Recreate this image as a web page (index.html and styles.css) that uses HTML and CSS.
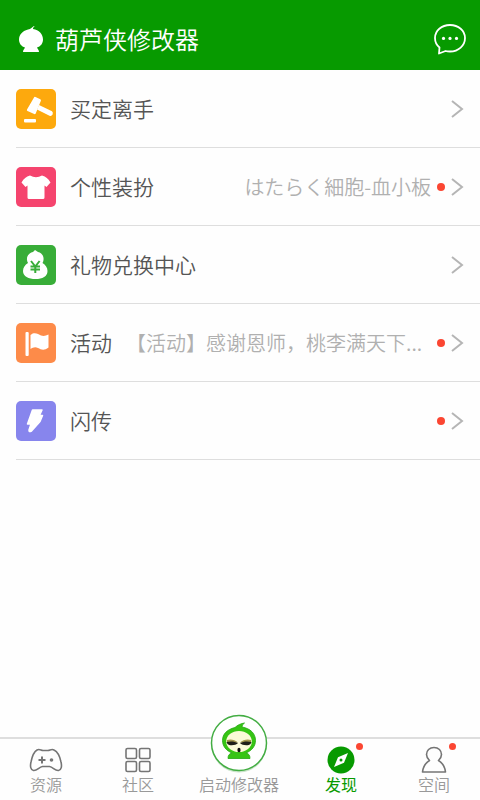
FILE: index.html
```html
<!DOCTYPE html>
<html lang="zh-CN">
<head>
<meta charset="utf-8">
<meta name="viewport" content="width=device-width, initial-scale=1">
<title>葫芦侠修改器</title>
<link rel="stylesheet" href="styles.css">
</head>
<body>
<header class="topbar">
  <svg class="logo" viewBox="0 0 26 28" aria-hidden="true"><path fill="#fff" d="M16 1C14 2 13 4 10 4.500C4 6 1 10 1 14.500C1 18.500 3.500 21.500 7 22.500C6.500 24 5 24.500 5 27H21C21 24.500 19.500 24 19 22.500C22.500 21.500 25 18.500 25 14.500C25 9 21 5 15 4Q14.500 2.500 16.500 1.500Z"/></svg>
  <h1 class="title">葫芦侠修改器</h1>
  <button class="chat" type="button" aria-label="消息">
    <svg viewBox="0 0 34 34" aria-hidden="true"><path fill="none" stroke="#fff" stroke-width="1.800" stroke-linejoin="round" d="M17 3C8.500 3 2 8.600 2 16C2 20 3.500 23 6.500 25.500L6 31.500L12.500 29C14 29.400 15.500 29.500 17 29.500C25.500 29.500 32 23.500 32 16C32 8.600 25.500 3 17 3Z"/><g fill="#fff"><circle cx="10.500" cy="16.400" r="1.600"/><circle cx="17" cy="16.400" r="1.600"/><circle cx="23.500" cy="16.400" r="1.600"/></g></svg>
  </button>
</header>
<main class="list">
  <a class="row" href="#auction">
    <svg class="tile orange" viewBox="0 0 40 40" aria-hidden="true"><g fill="#fff"><rect x="8" y="30" width="12" height="3.600" rx="1"/><path d="M18 8.500Q18.500 7.500 19.500 8L24.300 10.200Q25.300 10.700 24.900 11.700L19.700 24.500Q19.200 25.500 18.200 25L11.500 22Q10.500 21.500 11 20.500Z"/><path d="M23 16L36 22.300Q37.500 23.500 36.500 25.500Q35.500 27.500 33.500 26.700L21 20.500Z"/></g></svg>
    <span class="name">买定离手</span><span class="note"></span>
    <svg class="arrow" viewBox="0 0 14 22" aria-hidden="true"><path d="M2 3L12 11L2 19"/></svg>
  </a>
  <a class="row" href="#dress">
    <svg class="tile pink" viewBox="0 0 40 40" aria-hidden="true"><path fill="#fff" d="M14 8.500Q20 12 26 8.500C30 9.500 32 11.500 34.500 15.500L30.500 20L28.500 18.500V30.500Q28.500 32 27 32H13Q11.500 32 11.500 30.500V18.500L9.500 20L5.500 15.500C8 11.500 10 9.500 14 8.500Z"/></svg>
    <span class="name">个性装扮</span><span class="note end" lang="ja">はたらく細胞-血小板</span><i class="dot"></i>
    <svg class="arrow" viewBox="0 0 14 22" aria-hidden="true"><path d="M2 3L12 11L2 19"/></svg>
  </a>
  <a class="row" href="#gifts">
    <svg class="tile green" viewBox="0 0 40 40" aria-hidden="true"><path fill="#fff" d="M17 7L19 5L22 7C26 8 28 11 27.500 15C27.500 16 27 17 26.500 18C29.500 20 31.500 22.500 31.500 26C31.500 31.500 26.500 34 19.500 34S7 31.500 7 26C7 22.500 9 20 12 18C11.500 17 11 16 11 15C10.500 11 13 8 17 7Z"/><path fill="none" stroke="#38ad38" stroke-width="2" d="M15 16L19.300 21.500L23.600 16M14.500 21.500H24M14.500 24.500H24M19.300 21V28"/></svg>
    <span class="name">礼物兑换中心</span><span class="note"></span>
    <svg class="arrow" viewBox="0 0 14 22" aria-hidden="true"><path d="M2 3L12 11L2 19"/></svg>
  </a>
  <a class="row" href="#events">
    <svg class="tile coral" viewBox="0 0 40 40" aria-hidden="true"><g fill="#fff"><rect x="9.500" y="9" width="3.200" height="24" rx="1"/><path d="M14.500 12C19 8.500 22 11.500 25 12.500C28 13.500 30 12.500 32.500 11.500V24.500C28 28 25 26.500 22 25C19 23.500 17 24.500 14.500 26Z"/></g></svg>
    <span class="name">活动</span><span class="note">【活动】感谢恩师，桃李满天下...</span><i class="dot"></i>
    <svg class="arrow" viewBox="0 0 14 22" aria-hidden="true"><path d="M2 3L12 11L2 19"/></svg>
  </a>
  <a class="row" href="#transfer">
    <svg class="tile violet" viewBox="0 0 40 40" aria-hidden="true"><path fill="#fff" stroke="#fff" stroke-width="1.500" stroke-linejoin="round" d="M16.500 9H26L23.500 14.500H26.500L24 20.500L15.500 30Q12.800 31.500 13 29L15 23H11.500Z"/></svg>
    <span class="name">闪传</span><span class="note"></span><i class="dot"></i>
    <svg class="arrow" viewBox="0 0 14 22" aria-hidden="true"><path d="M2 3L12 11L2 19"/></svg>
  </a>
</main>
<nav class="tabs">
  <a class="tab" href="#resources">
    <svg class="icon" viewBox="0 0 34 28" aria-hidden="true"><path fill="none" stroke="#757575" stroke-width="1.600" stroke-linejoin="round" d="M8 4C10.500 2.500 12 4.500 14 4.500H19C21 4.500 22.500 2.500 25 4C29 6 31 11 32 16C33 20 32.500 24 29.500 24.500C26 25 24 21 20.500 20.500H13.500C10 21 8 25 4.500 24.500C1.500 24 1 20 2 16C3 11 4.500 6 8 4Z"/><path stroke="#757575" stroke-width="2" d="M9.500 14H16.500M13 10.500V17.500"/><circle cx="22.500" cy="14" r="1.800" fill="#757575"/></svg>
    <span>资源</span>
  </a>
  <a class="tab" href="#community">
    <svg class="icon" viewBox="0 0 34 28" aria-hidden="true"><g fill="none" stroke="#757575" stroke-width="1.600"><rect x="5" y="2.500" width="10.500" height="10" rx="1.500"/><rect x="18.500" y="2.500" width="10.500" height="10" rx="1.500"/><rect x="5" y="15.500" width="10.500" height="10" rx="1.500"/><rect x="18.500" y="15.500" width="10.500" height="10" rx="1.500"/></g></svg>
    <span>社区</span>
  </a>
  <a class="tab" href="#launch">
    <svg class="icon hero" viewBox="0 0 60 60" aria-hidden="true">
      <circle cx="30" cy="31" r="27.500" fill="#c9e3c9"/><circle cx="30" cy="29" r="27.500" fill="#fff" stroke="#43ad43" stroke-width="1.500"/>
      <path fill="#36c414" stroke="#23a812" stroke-width=".8" d="M35.500 9C32 9.500 28.500 11 26 13.500C18 15.500 13.500 20 13.500 26.500C13.500 32 17 36.500 23 39C20.500 39.500 19 41 19 44.500H41C41 41 39.500 39.500 37 39C43 36.500 46.500 32 46.500 26.500C46.500 19.500 41.500 14.500 33 13Q32.500 11 35.500 9Z"/>
      <ellipse cx="30" cy="27.500" rx="12.800" ry="10.500" fill="#fbfad8"/>
      <path fill="#a4974d" d="M18 26C22 24.500 26 26 29 28.500H18ZM42 26C38 24.500 34 26 31 28.500H42Z"/>
      <path fill="#1f1e18" d="M17.500 28C22 27 26 27.500 29 29C27 31.500 20.500 32 18.500 30ZM42.500 28C38 27 34 27.500 31 29C33 31.500 39.500 32 41.500 30Z"/><ellipse cx="30" cy="36" rx="1.600" ry="2.300" fill="#111"/>
    </svg>
    <span>启动修改器</span>
  </a>
  <a class="tab active" href="#discover" aria-current="page">
    <svg class="icon" viewBox="0 0 34 28" aria-hidden="true"><circle cx="17" cy="14" r="13.500" fill="#079a00"/><path fill="#fff" d="M24 7L20 16.800L10 21L14 11.200Z"/><circle cx="17" cy="14" r="1.500" fill="#079a00"/></svg>
    <span>发现</span><i class="dot badge"></i>
  </a>
  <a class="tab" href="#space">
    <svg class="icon" viewBox="0 0 34 28" aria-hidden="true"><path fill="none" stroke="#757575" stroke-width="1.600" stroke-linejoin="round" d="M17 1.500C12.500 1.500 9.500 4.500 9.500 8.500C9.500 11 10.700 12.800 12.500 14.500C8.500 17 6 21 5.500 26H28.500C28 21 25.500 17 21.500 14.500C23.300 12.800 24.500 11 24.500 8.500C24.500 4.500 21.500 1.500 17 1.500Z"/></svg>
    <span>空间</span><i class="dot badge"></i>
  </a>
</nav>
</body>
</html>
```
FILE: styles.css
```css
* { box-sizing: border-box; }

body {
  margin: 0;
  min-height: 100vh;
  display: flex;
  flex-direction: column;
  background: #fefefe;
  font-family: "Noto Sans CJK SC", sans-serif;
  font-weight: 350;
}

a { color: inherit; text-decoration: none; }
svg { display: block; flex: none; }

.topbar {
  display: flex;
  align-items: center;
  height: 70px;
  padding: 8px 13px 0 18px;
  background: #079a00;
  color: #fff;
}

.logo { width: 26px; height: 28px; }

.title {
  flex: 1;
  margin: 0 0 0 11px;
  font-size: 24px;
  line-height: 32px;
  font-weight: 350;
}

.chat {
  width: 34px;
  height: 34px;
  padding: 0;
  border: 0;
  background: none;
}

.list { flex: 1; padding-left: 16px; }

.row {
  display: flex;
  align-items: center;
  height: 78px;
  padding-right: 16px;
  border-bottom: 1px solid #dedede;
  color: #555;
}

.tile { width: 40px; height: 40px; border-radius: 5px; }
.orange { background: #fda90d; }
.pink { background: #f5446e; }
.green { background: #38ad38; }
.coral { background: #fd8b49; }
.violet { background: #8785ed; }

.name {
  margin-left: 14px;
  font-size: 21px;
  line-height: 31px;
  white-space: nowrap;
}

.note {
  flex: 1;
  min-width: 0;
  margin-left: 14px;
  color: #b0b0b0;
  font-size: 20px;
  line-height: 32px;
  white-space: nowrap;
}

.end { text-align: right; }
.note:lang(ja) { font-family: "Noto Sans CJK JP", sans-serif; }

.dot {
  flex: none;
  width: 8px;
  height: 8px;
  margin: 0 5px 0 6px;
  border-radius: 50%;
  background: #fb4632;
}

.arrow {
  width: 14px;
  height: 22px;
  fill: none;
  stroke: #b5b5b5;
  stroke-width: 2;
}

.tabs {
  display: grid;
  grid-template-columns: 92fr 92fr 110fr 94fr 92fr;
  grid-template-rows: minmax(0, 1fr);
  height: 63px;
  border-top: 2px solid #dedede;
  color: #999;
  font-size: 16px;
  line-height: 20px;
}

.tab {
  position: relative;
  display: flex;
  flex-direction: column;
  align-items: center;
  justify-content: flex-end;
  padding-bottom: 6px;
  white-space: nowrap;
}

.icon { width: 34px; height: 28px; }
.hero { width: 60px; height: 60px; }
.active { color: #079a00; font-weight: 400; }

.badge {
  position: absolute;
  top: 4px;
  left: calc(50% + 15px);
  width: 7px;
  height: 7px;
  margin: 0;
}
```
